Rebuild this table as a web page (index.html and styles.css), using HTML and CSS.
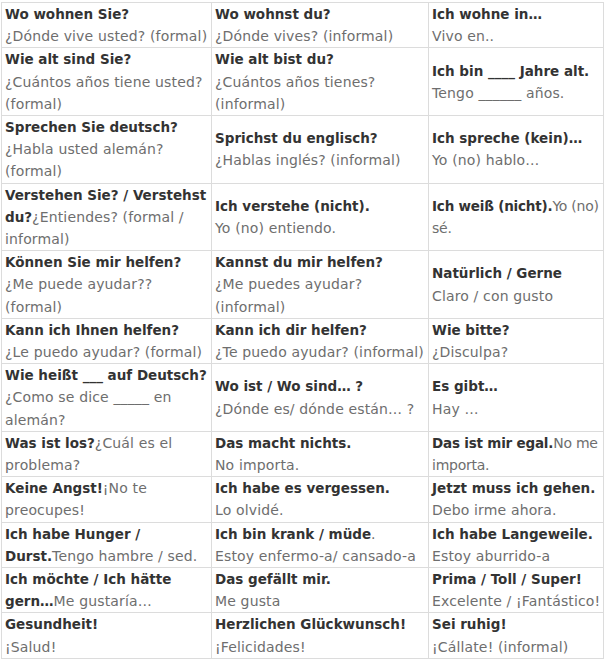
FILE: index.html
```html
<!DOCTYPE html>
<html lang="de">
<head>
<meta charset="utf-8">
<title>Frases</title>
<link rel="stylesheet" href="styles.css">
</head>
<body>
<table class="phrases">
  <colgroup><col class="c1"><col class="c2"><col class="c3"></colgroup>
  <tbody>
    <tr>
      <td><strong>Wo wohnen Sie?</strong><br>¿Dónde vive usted? (formal)</td>
      <td><strong>Wo wohnst du?</strong><br>¿Dónde vives? (informal)</td>
      <td><strong>Ich wohne in…</strong><br>Vivo en..</td>
    </tr>
    <tr>
      <td><strong>Wie alt sind Sie?</strong><br>¿Cuántos años tiene usted? (formal)</td>
      <td><strong>Wie alt bist du?</strong><br>¿Cuántos años tienes? (informal)</td>
      <td><strong>Ich bin ____ Jahre alt.</strong><br>Tengo ______ años.</td>
    </tr>
    <tr>
      <td><strong>Sprechen Sie deutsch?</strong><br>¿Habla usted alemán? (formal)</td>
      <td><strong>Sprichst du englisch?</strong><br>¿Hablas inglés? (informal)</td>
      <td><strong>Ich spreche (kein)…</strong><br>Yo (no) hablo…</td>
    </tr>
    <tr>
      <td><strong>Verstehen Sie? / Verstehst du?</strong>¿Entiendes? (formal / informal)</td>
      <td><strong>Ich verstehe (nicht).</strong><br>Yo (no) entiendo.</td>
      <td class="tight"><strong>Ich weiß (nicht).</strong>Yo (no) sé.</td>
    </tr>
    <tr>
      <td><strong>Können Sie mir helfen?</strong><br>¿Me puede ayudar?? (formal)</td>
      <td><strong>Kannst du mir helfen?</strong><br>¿Me puedes ayudar? (informal)</td>
      <td><strong>Natürlich / Gerne</strong><br>Claro / con gusto</td>
    </tr>
    <tr>
      <td><strong>Kann ich Ihnen helfen?</strong><br>¿Le puedo ayudar? (formal)</td>
      <td><strong>Kann ich dir helfen?</strong><br>¿Te puedo ayudar? (informal)</td>
      <td><strong>Wie bitte?</strong><br>¿Disculpa?</td>
    </tr>
    <tr>
      <td><strong>Wie heißt ___ auf Deutsch?</strong><br>¿Como se dice _____ en alemán?</td>
      <td><strong>Wo ist / Wo sind… ?</strong><br>¿Dónde es/ dónde están… ?</td>
      <td><strong>Es gibt…</strong><br>Hay …</td>
    </tr>
    <tr>
      <td><strong>Was ist los?</strong>¿Cuál es el problema?</td>
      <td><strong>Das macht nichts.</strong><br>No importa.</td>
      <td class="tight"><strong>Das ist mir egal.</strong>No me importa.</td>
    </tr>
    <tr>
      <td><strong>Keine Angst!</strong>¡No te preocupes!</td>
      <td><strong>Ich habe es vergessen.</strong><br>Lo olvidé.</td>
      <td><strong>Jetzt muss ich gehen.</strong><br>Debo irme ahora.</td>
    </tr>
    <tr>
      <td><strong>Ich habe Hunger / Durst.</strong>Tengo hambre / sed.</td>
      <td><strong>Ich bin krank / müde</strong>.<br>Estoy enfermo-a/ cansado-a</td>
      <td><strong>Ich habe Langeweile.</strong><br>Estoy aburrido-a</td>
    </tr>
    <tr>
      <td><strong>Ich möchte / Ich hätte gern…</strong>Me gustaría…</td>
      <td><strong>Das gefällt mir.</strong><br>Me gusta</td>
      <td><strong>Prima / Toll / Super!</strong><br>Excelente / ¡Fantástico!</td>
    </tr>
    <tr>
      <td><strong>Gesundheit!</strong><br>¡Salud!</td>
      <td><strong>Herzlichen Glückwunsch!</strong><br>¡Felicidades!</td>
      <td><strong>Sei ruhig!</strong><br>¡Cállate! (informal)</td>
    </tr>
  </tbody>
</table>
</body>
</html>
```
FILE: styles.css
```css
html, body {
  margin: 0;
  padding: 0;
  background: #ffffff;
}
body {
  padding: 2px 0 0 1px;
  font-family: "DejaVu Sans", "Open Sans", sans-serif;
  font-size: 14px;
  letter-spacing: 0.15px;
  color: #6e6e6e;
}
.phrases {
  border-collapse: collapse;
  table-layout: fixed;
  width: 602px;
}
.phrases .c1 { width: 210px; }
.phrases .c2 { width: 217px; }
.phrases .c3 { width: 175px; }
.phrases td {
  border: 1px solid #dcdcdc;
  padding: 0 2px 0 3px;
  line-height: 22.2px;
  vertical-align: middle;
}
.phrases strong {
  font-size: 13.5px;
  letter-spacing: 0;
  font-weight: 700;
  color: #333333;
}
.phrases td.tight {
  padding-right: 0;
  letter-spacing: -0.25px;
}
.phrases td.tight strong {
  letter-spacing: -0.2px;
}
```
